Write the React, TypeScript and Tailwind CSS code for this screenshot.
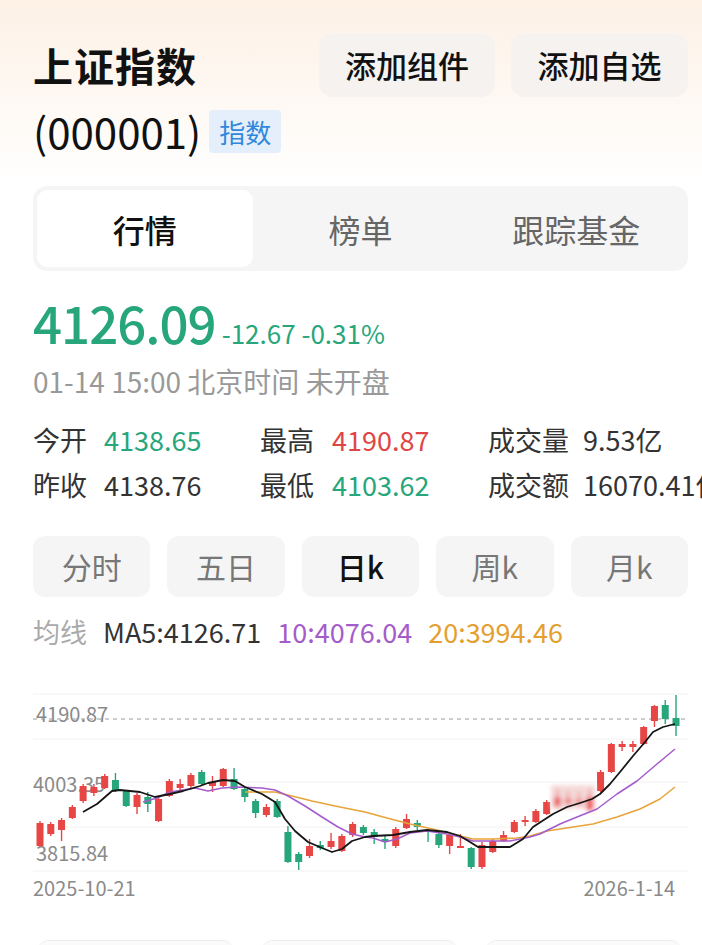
import React from "react";

type Candle = [number, number, number, number, number, "r" | "g"];

const RED = "#e84545";
const GREEN = "#27a67b";

// index, top, bottom, wickTop, wickBottom, colour
const candles: Candle[] = [
  [0, 824, 847, 822, 848, "r"],
  [1, 825, 835, 823, 837, "r"],
  [2, 821, 831, 819, 842, "r"],
  [3, 808, 819, 806, 820, "r"],
  [4, 787, 802, 785, 804, "r"],
  [5, 788, 794, 785, 797, "r"],
  [6, 777, 789, 775, 790, "r"],
  [7, 781, 792, 774, 793, "g"],
  [8, 792, 807, 791, 808, "g"],
  [9, 796, 808, 794, 815, "r"],
  [10, 798, 805, 793, 813, "g"],
  [11, 800, 822, 798, 823, "r"],
  [12, 782, 797, 780, 798, "r"],
  [13, 785, 789, 780, 791, "r"],
  [14, 776, 787, 774, 789, "r"],
  [15, 773, 785, 771, 787, "g"],
  [16, 783, 787, 777, 793, "r"],
  [17, 770, 787, 769, 788, "r"],
  [18, 780, 790, 769, 791, "g"],
  [19, 790, 798, 788, 803, "g"],
  [20, 802, 814, 800, 819, "g"],
  [21, 808, 816, 805, 818, "r"],
  [22, 802, 818, 800, 819, "g"],
  [23, 833, 863, 827, 864, "g"],
  [24, 855, 863, 853, 871, "g"],
  [25, 847, 857, 840, 859, "r"],
  [26, 846, 849, 842, 851, "g"],
  [27, 842, 848, 834, 850, "r"],
  [28, 837, 852, 835, 853, "r"],
  [29, 825, 836, 823, 838, "r"],
  [30, 828, 834, 826, 836, "g"],
  [31, 833, 838, 830, 845, "g"],
  [32, 840, 843, 836, 850, "g"],
  [33, 830, 847, 828, 849, "r"],
  [34, 820, 829, 815, 830, "r"],
  [35, 824, 828, 821, 831, "g"],
  [36, 831, 833, 831, 843, "g"],
  [37, 835, 846, 833, 849, "g"],
  [38, 836, 847, 834, 855, "r"],
  [39, 847, 849, 835, 849, "r"],
  [40, 849, 868, 848, 870, "g"],
  [41, 846, 868, 843, 870, "r"],
  [42, 842, 853, 840, 854, "r"],
  [43, 836, 842, 832, 843, "r"],
  [44, 823, 833, 821, 834, "r"],
  [45, 821, 823, 817, 827, "r"],
  [46, 812, 823, 810, 824, "r"],
  [47, 803, 815, 801, 816, "r"],
  [52, 773, 792, 771, 793, "r"],
  [53, 745, 773, 744, 774, "r"],
  [54, 745, 748, 742, 752, "r"],
  [55, 745, 748, 742, 753, "r"],
  [56, 728, 745, 727, 746, "r"],
  [57, 707, 722, 706, 728, "r"],
  [58, 706, 720, 701, 725, "g"],
  [59, 719, 727, 696, 737, "g"],
];

const blurred: Candle[] = [
  [48, 798, 807, 790, 810, "r"],
  [49, 800, 804, 792, 808, "r"],
  [50, 801, 804, 793, 807, "r"],
  [51, 798, 811, 790, 812, "r"],
];

const cx = (i: number) => 40 + i * 10.78;

const ma5 =
  "83,813 97,805 112,792 120,791 140,793 155,798 170,795 183,792 200,787 208,784 223,781 235,782 245,788 262,795 275,803 285,820 295,832 308,843 322,849 332,853 342,850 352,842 365,838 373,837 393,836 410,833 427,831 447,833 460,837 470,843 478,848 510,848 523,840 533,828 553,815 567,808 580,804 592,800 600,795 610,785 620,773 633,757 645,743 653,733 663,728 675,725";
const ma10 =
  "143,803 157,799 170,793 195,789 208,792 222,789 238,788 262,789 275,791 288,797 305,807 322,818 338,828 352,835 365,838 373,839 385,843 397,840 410,834 427,832 447,835 460,838 473,842 510,842 530,838 540,835 560,825 577,818 597,810 617,795 637,782 657,765 675,750";
const ma20 =
  "245,793 275,793 292,797 312,802 335,807 365,813 387,819 410,825 437,831 460,837 473,840 493,840 517,839 530,837 547,832 573,828 593,825 617,818 640,810 660,800 675,788";

function CandleShape({ c }: { c: Candle }) {
  const [i, top, bottom, wt, wb, col] = c;
  const x = cx(i);
  const fill = col === "r" ? RED : GREEN;
  return (
    <g>
      <line x1={x} x2={x} y1={wt} y2={wb} stroke={fill} strokeWidth={1.4} />
      <rect x={x - 3.5} y={top} width={7} height={Math.max(bottom - top, 1.5)} fill={fill} />
    </g>
  );
}

function KChart() {
  const grid = [695, 740, 783, 828, 872];
  return (
    <svg width={702} height={254} viewBox="0 651 702 254" className="block">
      <defs>
        <filter id="soft" x="-50%" y="-50%" width="200%" height="200%">
          <feGaussianBlur stdDeviation="2.2" />
        </filter>
      </defs>
      {grid.map((y) => (
        <line key={y} x1={33} x2={688} y1={y} y2={y} stroke="#f2f2f2" strokeWidth={1} />
      ))}
      <g fill="#8a8a8a" fontSize={20} fontFamily="'Noto Sans CJK SC', sans-serif">
        <text x={36} y={723}>4190.87</text>
        <text x={33} y={793}>4003.35</text>
        <text x={36} y={862}>3815.84</text>
        <text x={33} y={897}>2025-10-21</text>
        <text x={675} y={897} textAnchor="end">2026-1-14</text>
      </g>
      <line x1={33} x2={688} y1={720} y2={720} stroke="#9a9a9a" strokeWidth={1} strokeDasharray="4 4" />
      {candles.map((c) => (
        <CandleShape key={c[0]} c={c} />
      ))}
      <g filter="url(#soft)" opacity={0.85}>
        <rect x={551} y={786} width={44} height={24} fill="#f3d3d3" />
        {blurred.map((c) => (
          <CandleShape key={c[0]} c={c} />
        ))}
      </g>
      <polyline points={ma20} fill="none" stroke="#e7a43a" strokeWidth={1.6} strokeLinejoin="round" />
      <polyline points={ma10} fill="none" stroke="#a45ccb" strokeWidth={1.5} strokeLinejoin="round" />
      <polyline points={ma5} fill="none" stroke="#161616" strokeWidth={1.8} strokeLinejoin="round" />
    </svg>
  );
}

const periods = ["分时", "五日", "日k", "周k", "月k"];

export default function App() {
  return (
    <div
      className="w-[702px] h-[945px] overflow-hidden bg-white text-[#222]"
      style={{ fontFamily: "'Noto Sans CJK SC', 'Noto Sans', sans-serif" }}
    >
      <div className="h-[186px] bg-gradient-to-b from-[#fdf1e6] via-[#fef8f2] to-white pl-[33px] pr-[14px] pt-[33px] flex justify-between items-start">
        <div className="flex flex-col">
          <h1 className="text-[40px] font-bold leading-[64px] tracking-[1px] text-[#111]">上证指数</h1>
          <div className="flex items-center gap-[8px] h-[60px] mt-[4px]">
            <span className="text-[42px] leading-none text-[#111]">(000001)</span>
            <span className="h-[43px] px-[10px] flex items-center rounded-[4px] bg-[#e4effb] text-[#2f88dc] text-[26px]">
              指数
            </span>
          </div>
        </div>
        <div className="flex gap-[16px]">
          <button className="w-[176px] h-[64px] rounded-[14px] bg-[#f5f2ef] text-[31px] font-medium text-[#111]">
            添加组件
          </button>
          <button className="w-[177px] h-[64px] rounded-[14px] bg-[#f5f2ef] text-[31px] font-medium text-[#111]">
            添加自选
          </button>
        </div>
      </div>

      <div className="pl-[33px] pr-[14px]">
        <div className="h-[85px] rounded-[14px] bg-[#f5f5f5] p-[4px] grid grid-cols-3">
          <div className="rounded-[11px] bg-white flex items-center justify-center text-[32px] font-medium text-[#111]">
            行情
          </div>
          <div className="flex items-center justify-center text-[32px] text-[#666]">榜单</div>
          <div className="flex items-center justify-center text-[32px] text-[#666]">跟踪基金</div>
        </div>

        <div className="mt-[21px] flex items-baseline gap-[6px] leading-[60px]">
          <span className="text-[51px] font-medium text-[#27a67b] tracking-[-1px]">4126.09</span>
          <span className="text-[26px] text-[#27a67b]">-12.67 -0.31%</span>
        </div>
        <div className="text-[28px] leading-[36px] text-[#999]">01-14 15:00 北京时间 未开盘</div>

        <div className="mt-[18px] grid grid-cols-[227px_228px_1fr] text-[27px] leading-[45px] whitespace-nowrap">
          <div className="flex gap-[17px]">
            <span className="text-[#333]">今开</span>
            <span className="text-[#27a67b]">4138.65</span>
          </div>
          <div className="flex gap-[18px]">
            <span className="text-[#333]">最高</span>
            <span className="text-[#e04545]">4190.87</span>
          </div>
          <div className="flex gap-[14px]">
            <span className="text-[#333]">成交量</span>
            <span className="text-[#333]">9.53亿</span>
          </div>
          <div className="flex gap-[17px]">
            <span className="text-[#333]">昨收</span>
            <span className="text-[#333]">4138.76</span>
          </div>
          <div className="flex gap-[18px]">
            <span className="text-[#333]">最低</span>
            <span className="text-[#27a67b]">4103.62</span>
          </div>
          <div className="flex gap-[14px]">
            <span className="text-[#333]">成交额</span>
            <span className="text-[#333]">16070.41亿</span>
          </div>
        </div>

        <div className="mt-[29px] grid grid-cols-5 gap-[17px]">
          {periods.map((p) => (
            <div
              key={p}
              className={
                p === "日k"
                  ? "h-[61px] rounded-[12px] bg-[#f5f5f5] flex items-center justify-center text-[30px] font-medium text-[#111]"
                  : "h-[61px] rounded-[12px] bg-[#f5f5f5] flex items-center justify-center text-[30px] text-[#777]"
              }
            >
              {p}
            </div>
          ))}
        </div>

        <div className="mt-[17px] flex gap-[16px] text-[27px] leading-[36px] whitespace-nowrap">
          <span className="text-[#aaa]">均线</span>
          <span className="text-[#333]">MA5:4126.71</span>
          <span className="text-[#a45ccb]">10:4076.04</span>
          <span className="text-[#e3a030]">20:3994.46</span>
        </div>
      </div>

      <KChart />

      <div className="mt-[36px] pl-[38px] pr-[21px] grid grid-cols-3 gap-[29px]">
        <div className="h-[40px] rounded-t-[10px] border-t border-[#eeeeee] bg-[#fafafa]" />
        <div className="h-[40px] rounded-t-[10px] border-t border-[#eeeeee] bg-[#fafafa]" />
        <div className="h-[40px] rounded-t-[10px] border-t border-[#eeeeee] bg-[#fafafa]" />
      </div>
    </div>
  );
}
